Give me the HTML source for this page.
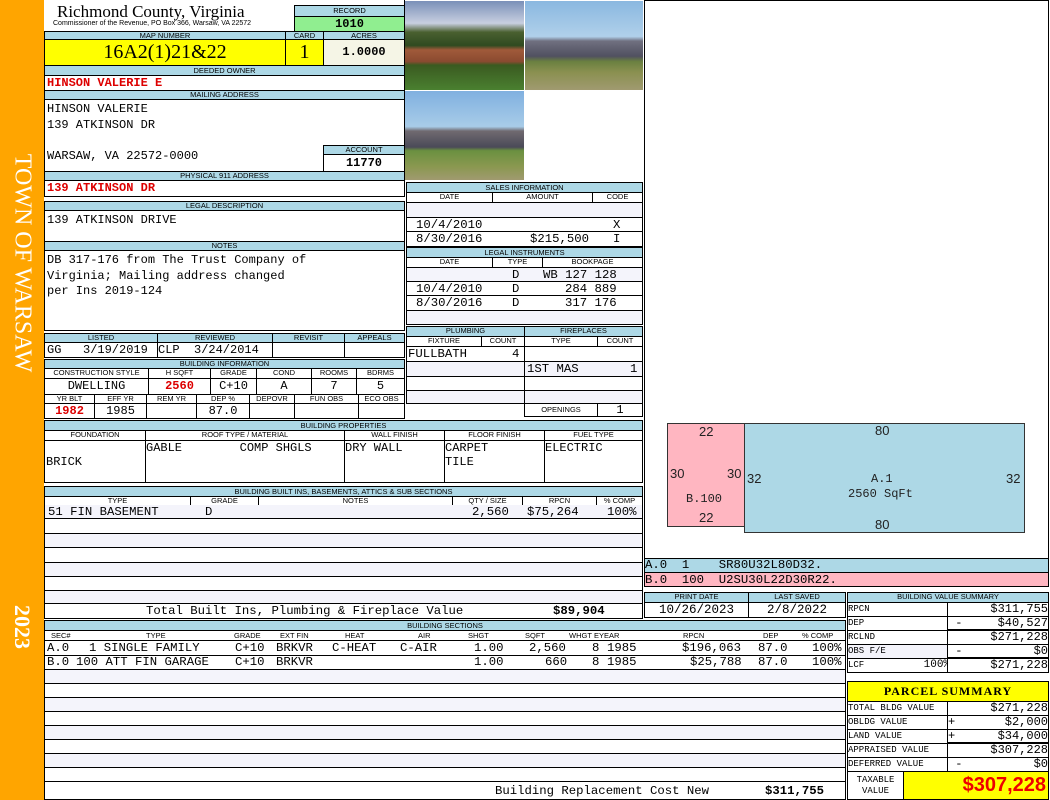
<!DOCTYPE html>
<html><head><meta charset="utf-8"><style>
*{margin:0;padding:0}
body{width:1050px;height:800px;position:relative;background:#fff;overflow:hidden;font-family:"Liberation Sans",sans-serif}
.c{position:absolute;box-sizing:border-box;border:1px solid #000;overflow:hidden;white-space:pre}
.h{background:#add8e6;font-size:7.5px;text-align:center;line-height:8px;color:#000}
.m{font-family:"Liberation Mono",monospace;font-size:12px;line-height:14px}
.r{color:#d00;font-weight:bold}
.lt{background:#f4f4fb}
.rt{text-align:right}
.ct{text-align:center}
.s{position:absolute;font-family:"Liberation Mono",monospace;font-size:12.3px;white-space:pre;line-height:14px}
.hl{position:absolute;font-size:7.5px;line-height:9px;white-space:nowrap}
</style></head><body>
<div style="position:absolute;left:0;top:0;width:44px;height:800px;background:#ffa500"></div>
<div style="position:absolute;left:22px;top:263px;transform:translate(-50%,-50%) rotate(90deg);white-space:nowrap;color:#fff;font:24px 'Liberation Serif',serif">TOWN OF WARSAW</div>
<div style="position:absolute;left:22px;top:627px;transform:translate(-50%,-50%) rotate(90deg);white-space:nowrap;color:#fff;font:bold 22px 'Liberation Serif',serif">2023</div>

<div style="position:absolute;left:57px;top:2px;font:17px 'Liberation Serif',serif;white-space:nowrap">Richmond County, Virginia</div>
<div style="position:absolute;left:53px;top:20px;font:7px 'Liberation Sans',sans-serif;white-space:nowrap">Commissioner of the Revenue, PO Box 366, Warsaw, VA 22572</div>
<div class="c h" style="left:294px;top:5px;width:111px;height:12px;line-height:10px">RECORD</div>
<div class="c" style="left:294px;top:16px;width:111px;height:16px;background:#90ee90;font:bold 12px 'Liberation Mono',monospace;text-align:center;line-height:14px">1010</div>

<div class="c h" style="left:44px;top:31px;width:242px;height:9px">MAP NUMBER</div>
<div class="c h" style="left:285px;top:31px;width:39px;height:9px">CARD</div>
<div class="c h" style="left:323px;top:31px;width:82px;height:9px">ACRES</div>
<div class="c" style="left:44px;top:39px;width:242px;height:27px;background:#ffff00;font:20px 'Liberation Serif',serif;text-align:center;line-height:25px">16A2(1)21&amp;22</div>
<div class="c" style="left:285px;top:39px;width:39px;height:27px;background:#ffff00;font:20px 'Liberation Serif',serif;text-align:center;line-height:25px">1</div>
<div class="c" style="left:323px;top:39px;width:82px;height:27px;background:#f5f5e6;font:bold 12px 'Liberation Mono',monospace;text-align:center;line-height:25px">1.0000</div>

<div class="c h" style="left:44px;top:65px;width:361px;height:11px;line-height:9px">DEEDED OWNER</div>
<div class="c m r" style="left:44px;top:75px;width:361px;height:16px;padding-left:2px">HINSON VALERIE E</div>
<div class="c h" style="left:44px;top:90px;width:361px;height:10px">MAILING ADDRESS</div>
<div class="c m" style="left:44px;top:99px;width:361px;height:73px;padding:2px 0 0 2px;line-height:15.5px">HINSON VALERIE
139 ATKINSON DR

WARSAW, VA 22572-0000</div>
<div class="c h" style="left:323px;top:145px;width:82px;height:10px">ACCOUNT</div>
<div class="c" style="left:323px;top:154px;width:82px;height:18px;font:bold 12px 'Liberation Mono',monospace;text-align:center;line-height:16px">11770</div>
<div class="c h" style="left:44px;top:171px;width:361px;height:10px">PHYSICAL 911 ADDRESS</div>
<div class="c m r" style="left:44px;top:180px;width:361px;height:17px;padding-left:2px">139 ATKINSON DR</div>

<div class="c h" style="left:44px;top:201px;width:361px;height:10px">LEGAL DESCRIPTION</div>
<div class="c m" style="left:44px;top:210px;width:361px;height:32px;padding:2px 0 0 2px">139 ATKINSON DRIVE</div>
<div class="c h" style="left:44px;top:241px;width:361px;height:10px">NOTES</div>
<div class="c m" style="left:44px;top:250px;width:361px;height:81px;padding:2px 0 0 2px;line-height:15.5px">DB 317-176 from The Trust Company of
Virginia; Mailing address changed
per Ins 2019-124</div>

<div class="c h" style="left:44px;top:333px;width:114px;height:10px">LISTED</div>
<div class="c h" style="left:157px;top:333px;width:116px;height:10px">REVIEWED</div>
<div class="c h" style="left:272px;top:333px;width:73px;height:10px">REVISIT</div>
<div class="c h" style="left:344px;top:333px;width:61px;height:10px">APPEALS</div>
<div class="c m" style="left:44px;top:342px;width:114px;height:16px;padding-left:2px">GG   3/19/2019</div>
<div class="c m" style="left:157px;top:342px;width:116px;height:16px">CLP  3/24/2014</div>
<div class="c" style="left:272px;top:342px;width:73px;height:16px"></div>
<div class="c" style="left:344px;top:342px;width:61px;height:16px"></div>

<div class="c h" style="left:44px;top:359px;width:361px;height:10px">BUILDING INFORMATION</div>
<div class="c h" style="left:44px;top:368px;width:105px;height:11px;background:#fff">CONSTRUCTION STYLE</div>
<div class="c h" style="left:148px;top:368px;width:63px;height:11px;background:#fff">H SQFT</div>
<div class="c h" style="left:210px;top:368px;width:47px;height:11px;background:#fff">GRADE</div>
<div class="c h" style="left:256px;top:368px;width:56px;height:11px;background:#fff">COND</div>
<div class="c h" style="left:311px;top:368px;width:46px;height:11px;background:#fff">ROOMS</div>
<div class="c h" style="left:356px;top:368px;width:49px;height:11px;background:#fff">BDRMS</div>
<div class="c m ct" style="left:44px;top:378px;width:105px;height:17px">DWELLING</div>
<div class="c m ct r" style="left:148px;top:378px;width:63px;height:17px">2560</div>
<div class="c m ct" style="left:210px;top:378px;width:47px;height:17px">C+10</div>
<div class="c m ct" style="left:256px;top:378px;width:56px;height:17px">A</div>
<div class="c m ct" style="left:311px;top:378px;width:46px;height:17px">7</div>
<div class="c m ct" style="left:356px;top:378px;width:49px;height:17px">5</div>
<div class="c h" style="left:44px;top:394px;width:51px;height:10px;background:#fff">YR BLT</div>
<div class="c h" style="left:94px;top:394px;width:53px;height:10px;background:#fff">EFF YR</div>
<div class="c h" style="left:146px;top:394px;width:51px;height:10px;background:#fff">REM YR</div>
<div class="c h" style="left:196px;top:394px;width:54px;height:10px;background:#fff">DEP %</div>
<div class="c h" style="left:249px;top:394px;width:46px;height:10px;background:#fff">DEPOVR</div>
<div class="c h" style="left:294px;top:394px;width:65px;height:10px;background:#fff">FUN OBS</div>
<div class="c h" style="left:358px;top:394px;width:47px;height:10px;background:#fff">ECO OBS</div>
<div class="c m ct r" style="left:44px;top:403px;width:51px;height:16px">1982</div>
<div class="c m ct" style="left:94px;top:403px;width:53px;height:16px">1985</div>
<div class="c m" style="left:146px;top:403px;width:51px;height:16px"></div>
<div class="c m ct" style="left:196px;top:403px;width:54px;height:16px">87.0</div>
<div class="c" style="left:249px;top:403px;width:46px;height:16px"></div>
<div class="c" style="left:294px;top:403px;width:65px;height:16px"></div>
<div class="c" style="left:358px;top:403px;width:47px;height:16px"></div>

<div class="c h" style="left:44px;top:420px;width:599px;height:11px;line-height:9px">BUILDING PROPERTIES</div>
<div class="c h" style="left:44px;top:430px;width:102px;height:11px;background:#fff">FOUNDATION</div>
<div class="c h" style="left:145px;top:430px;width:200px;height:11px;background:#fff">ROOF TYPE / MATERIAL</div>
<div class="c h" style="left:344px;top:430px;width:101px;height:11px;background:#fff">WALL FINISH</div>
<div class="c h" style="left:444px;top:430px;width:101px;height:11px;background:#fff">FLOOR FINISH</div>
<div class="c h" style="left:544px;top:430px;width:99px;height:11px;background:#fff">FUEL TYPE</div>
<div class="c m" style="left:44px;top:440px;width:102px;height:43px;padding:14px 0 0 1px">BRICK</div>
<div class="c m" style="left:145px;top:440px;width:200px;height:43px">GABLE        COMP SHGLS</div>
<div class="c m" style="left:344px;top:440px;width:101px;height:43px">DRY WALL</div>
<div class="c m" style="left:444px;top:440px;width:101px;height:43px">CARPET
TILE</div>
<div class="c m" style="left:544px;top:440px;width:99px;height:43px">ELECTRIC</div>

<div class="c h" style="left:44px;top:486px;width:599px;height:11px;line-height:9px">BUILDING BUILT INS, BASEMENTS, ATTICS &amp; SUB SECTIONS</div>
<div class="c h" style="left:44px;top:496px;width:147px;height:10px;background:#fff">TYPE</div>
<div class="c h" style="left:190px;top:496px;width:69px;height:10px;background:#fff">GRADE</div>
<div class="c h" style="left:258px;top:496px;width:195px;height:10px;background:#fff">NOTES</div>
<div class="c h" style="left:452px;top:496px;width:71px;height:10px;background:#fff">QTY / SIZE</div>
<div class="c h" style="left:522px;top:496px;width:75px;height:10px;background:#fff">RPCN</div>
<div class="c h" style="left:596px;top:496px;width:47px;height:10px;background:#fff">% COMP</div>
<div class="c lt" style="left:44px;top:505px;width:599px;height:14px;border-top:none"></div>
<span class="s" style="left:48px;top:505px">51 FIN BASEMENT</span>
<span class="s" style="left:205px;top:505px">D</span>
<span class="s" style="left:472px;top:505px">2,560</span>
<span class="s" style="left:527px;top:505px">$75,264</span>
<span class="s" style="left:607px;top:505px">100%</span>
<div class="c" style="left:44px;top:518px;width:599px;height:16px"></div>
<div class="c lt" style="left:44px;top:533px;width:599px;height:15px"></div>
<div class="c" style="left:44px;top:547px;width:599px;height:16px"></div>
<div class="c lt" style="left:44px;top:562px;width:599px;height:15px"></div>
<div class="c" style="left:44px;top:576px;width:599px;height:15px"></div>
<div class="c lt" style="left:44px;top:590px;width:599px;height:14px"></div>
<div class="c" style="left:44px;top:603px;width:599px;height:16px"></div>
<span class="s" style="left:146px;top:604px">Total Built Ins, Plumbing &amp; Fireplace Value</span>
<span class="s" style="left:553px;top:604px;font-weight:bold">$89,904</span>

<div class="c h" style="left:44px;top:620px;width:802px;height:11px;line-height:9px">BUILDING SECTIONS</div>
<div class="c" style="left:44px;top:630px;width:802px;height:11px"></div>
<span class="hl" style="left:51px;top:631px">SEC#</span>
<span class="hl" style="left:146px;top:631px">TYPE</span>
<span class="hl" style="left:234px;top:631px">GRADE</span>
<span class="hl" style="left:280px;top:631px">EXT FIN</span>
<span class="hl" style="left:345px;top:631px">HEAT</span>
<span class="hl" style="left:418px;top:631px">AIR</span>
<span class="hl" style="left:468px;top:631px">SHGT</span>
<span class="hl" style="left:525px;top:631px">SQFT</span>
<span class="hl" style="left:569px;top:631px">WHGT</span>
<span class="hl" style="left:594px;top:631px">EYEAR</span>
<span class="hl" style="left:683px;top:631px">RPCN</span>
<span class="hl" style="left:763px;top:631px">DEP</span>
<span class="hl" style="left:802px;top:631px">% COMP</span>
<div class="c" style="left:44px;top:640px;width:802px;height:16px"></div>
<div class="c" style="left:44px;top:655px;width:802px;height:15px"></div>
<span class="s" style="left:47px;top:641px">A.0</span>
<span class="s" style="left:89px;top:641px">1 SINGLE FAMILY</span>
<span class="s" style="left:235px;top:641px">C+10</span>
<span class="s" style="left:276px;top:641px">BRKVR</span>
<span class="s" style="left:332px;top:641px">C-HEAT</span>
<span class="s" style="left:400px;top:641px">C-AIR</span>
<span class="s" style="left:474px;top:641px">1.00</span>
<span class="s" style="left:529px;top:641px">2,560</span>
<span class="s" style="left:592px;top:641px">8</span>
<span class="s" style="left:607px;top:641px">1985</span>
<span class="s" style="left:682px;top:641px">$196,063</span>
<span class="s" style="left:758px;top:641px">87.0</span>
<span class="s" style="left:812px;top:641px">100%</span>
<span class="s" style="left:47px;top:655px">B.0</span>
<span class="s" style="left:76px;top:655px">100 ATT FIN GARAGE</span>
<span class="s" style="left:235px;top:655px">C+10</span>
<span class="s" style="left:276px;top:655px">BRKVR</span>
<span class="s" style="left:474px;top:655px">1.00</span>
<span class="s" style="left:545px;top:655px">660</span>
<span class="s" style="left:592px;top:655px">8</span>
<span class="s" style="left:607px;top:655px">1985</span>
<span class="s" style="left:690px;top:655px">$25,788</span>
<span class="s" style="left:758px;top:655px">87.0</span>
<span class="s" style="left:812px;top:655px">100%</span>
<div class="c lt" style="left:44px;top:669px;width:802px;height:15px"></div>
<div class="c" style="left:44px;top:683px;width:802px;height:15px"></div>
<div class="c lt" style="left:44px;top:697px;width:802px;height:15px"></div>
<div class="c" style="left:44px;top:711px;width:802px;height:15px"></div>
<div class="c lt" style="left:44px;top:725px;width:802px;height:15px"></div>
<div class="c" style="left:44px;top:739px;width:802px;height:15px"></div>
<div class="c lt" style="left:44px;top:753px;width:802px;height:15px"></div>
<div class="c" style="left:44px;top:767px;width:802px;height:15px"></div>
<div class="c" style="left:44px;top:781px;width:802px;height:19px"></div>
<span class="s" style="left:495px;top:784px">Building Replacement Cost New</span>
<span class="s" style="left:765px;top:784px;font-weight:bold">$311,755</span>

<div style="position:absolute;left:405px;top:1px;width:119px;height:89px;background:linear-gradient(#7a90b8 0%,#c8cfe0 25%,#4a6030 35%,#2f4a20 50%,#a05a3a 55%,#8a4a30 68%,#3a5a20 72%,#4a8030 100%)"></div>
<div style="position:absolute;left:525px;top:1px;width:118px;height:89px;background:linear-gradient(#8ab8e0 0%,#b0d0ea 40%,#707080 45%,#505060 62%,#6a8040 68%,#8a9050 80%,#a09a70 100%)"></div>
<div style="position:absolute;left:405px;top:91px;width:119px;height:89px;background:linear-gradient(#80b0e0 0%,#a8cce8 40%,#706a70 45%,#4a4a58 63%,#6a9040 67%,#8a9850 85%,#a09a70 100%)"></div>
<div style="position:absolute;left:404px;top:0;width:1px;height:181px;background:#000"></div>

<div class="c h" style="left:406px;top:182px;width:237px;height:11px;line-height:9px">SALES INFORMATION</div>
<div class="c h" style="left:406px;top:192px;width:87px;height:11px;background:#fff">DATE</div>
<div class="c h" style="left:492px;top:192px;width:101px;height:11px;background:#fff">AMOUNT</div>
<div class="c h" style="left:592px;top:192px;width:51px;height:11px;background:#fff">CODE</div>
<div class="c lt" style="left:406px;top:202px;width:237px;height:16px"></div>
<div class="c" style="left:406px;top:217px;width:237px;height:15px"></div>
<div class="c" style="left:406px;top:231px;width:237px;height:16px"></div>
<span class="s" style="left:416px;top:218px">10/4/2010</span>
<span class="s" style="left:613px;top:218px">X</span>
<span class="s" style="left:416px;top:232px">8/30/2016</span>
<span class="s" style="left:530px;top:232px">$215,500</span>
<span class="s" style="left:613px;top:232px">I</span>
<div class="c h" style="left:406px;top:247px;width:237px;height:11px;line-height:9px">LEGAL INSTRUMENTS</div>
<div class="c h" style="left:406px;top:257px;width:87px;height:11px;background:#fff">DATE</div>
<div class="c h" style="left:492px;top:257px;width:51px;height:11px;background:#fff">TYPE</div>
<div class="c h" style="left:542px;top:257px;width:101px;height:11px;background:#fff">BOOKPAGE</div>
<div class="c lt" style="left:406px;top:267px;width:237px;height:15px"></div>
<div class="c" style="left:406px;top:281px;width:237px;height:15px"></div>
<div class="c" style="left:406px;top:295px;width:237px;height:16px"></div>
<div class="c lt" style="left:406px;top:310px;width:237px;height:15px"></div>
<span class="s" style="left:512px;top:268px">D</span>
<span class="s" style="left:543px;top:268px">WB 127 128</span>
<span class="s" style="left:416px;top:282px">10/4/2010</span>
<span class="s" style="left:512px;top:282px">D</span>
<span class="s" style="left:565px;top:282px">284 889</span>
<span class="s" style="left:416px;top:296px">8/30/2016</span>
<span class="s" style="left:512px;top:296px">D</span>
<span class="s" style="left:565px;top:296px">317 176</span>

<div class="c h" style="left:406px;top:326px;width:119px;height:11px">PLUMBING</div>
<div class="c h" style="left:524px;top:326px;width:119px;height:11px">FIREPLACES</div>
<div class="c h" style="left:406px;top:336px;width:76px;height:11px;background:#fff">FIXTURE</div>
<div class="c h" style="left:481px;top:336px;width:44px;height:11px;background:#fff">COUNT</div>
<div class="c h" style="left:524px;top:336px;width:74px;height:11px;background:#fff">TYPE</div>
<div class="c h" style="left:597px;top:336px;width:46px;height:11px;background:#fff">COUNT</div>
<div class="c" style="left:406px;top:346px;width:119px;height:16px"></div>
<div class="c lt" style="left:406px;top:361px;width:119px;height:16px"></div>
<div class="c" style="left:406px;top:376px;width:119px;height:15px"></div>
<div class="c lt" style="left:406px;top:390px;width:119px;height:14px"></div>
<div class="c" style="left:524px;top:346px;width:119px;height:16px"></div>
<div class="c lt" style="left:524px;top:361px;width:119px;height:16px"></div>
<div class="c" style="left:524px;top:376px;width:119px;height:15px"></div>
<div class="c lt" style="left:524px;top:390px;width:119px;height:14px"></div>
<span class="s" style="left:408px;top:347px">FULLBATH</span>
<span class="s" style="left:512px;top:347px">4</span>
<span class="s" style="left:527px;top:362px">1ST MAS</span>
<span class="s" style="left:630px;top:362px">1</span>
<div class="c h" style="left:524px;top:403px;width:74px;height:14px;background:#fff;line-height:12px">OPENINGS</div>
<div class="c m ct" style="left:597px;top:403px;width:46px;height:14px;line-height:12px">1</div>

<div class="c" style="left:644px;top:0;width:405px;height:559px;background:#fff"></div>
<div style="position:absolute;left:667px;top:423px;width:78px;height:104px;background:#ffb6c1;border:1px solid #333;box-sizing:border-box"></div>
<div style="position:absolute;left:744px;top:423px;width:281px;height:110px;background:#add8e6;border:1px solid #333;box-sizing:border-box"></div>
<div style="position:absolute;font:13px 'Liberation Sans',sans-serif;color:#222;white-space:nowrap">
<span style="position:absolute;left:699px;top:424px">22</span>
<span style="position:absolute;left:699px;top:510px">22</span>
<span style="position:absolute;left:670px;top:466px">30</span>
<span style="position:absolute;left:727px;top:466px">30</span>
<span style="position:absolute;left:747px;top:471px">32</span>
<span style="position:absolute;left:1006px;top:471px">32</span>
<span style="position:absolute;left:875px;top:423px">80</span>
<span style="position:absolute;left:875px;top:517px">80</span>
</div>
<div style="position:absolute;left:686px;top:492px;font:12px 'Liberation Mono',monospace;color:#222">B.100</div>
<div style="position:absolute;left:871px;top:472px;font:12px 'Liberation Mono',monospace;color:#222">A.1</div>
<div style="position:absolute;left:848px;top:487px;font:12px 'Liberation Mono',monospace;color:#222">2560 SqFt</div>

<div class="c m" style="left:644px;top:558px;width:405px;height:15px;background:#add8e6;line-height:13px;border-bottom:none;font-size:12.3px">A.0  1    SR80U32L80D32.</div>
<div class="c m" style="left:644px;top:572px;width:405px;height:15px;background:#ffb6c1;line-height:14px;font-size:12.3px">B.0  100  U2SU30L22D30R22.</div>

<div class="c h" style="left:644px;top:592px;width:105px;height:11px">PRINT DATE</div>
<div class="c h" style="left:748px;top:592px;width:98px;height:11px">LAST SAVED</div>
<div class="c m ct" style="left:644px;top:602px;width:105px;height:16px;font-size:12.5px">10/26/2023</div>
<div class="c m ct" style="left:748px;top:602px;width:98px;height:16px;font-size:12.5px">2/8/2022</div>

<div class="c h" style="left:847px;top:592px;width:202px;height:11px">BUILDING VALUE SUMMARY</div>
<div class="c m" style="left:847px;top:602px;width:101px;height:15px;font-size:9px;line-height:13px">RPCN</div>
<div class="c m rt" style="left:947px;top:602px;width:102px;height:15px;line-height:13px">$311,755</div>
<div class="c m" style="left:847px;top:616px;width:101px;height:15px;font-size:9px;line-height:13px">DEP</div>
<div class="c m rt" style="left:947px;top:616px;width:102px;height:15px;line-height:13px;border-bottom:2px solid #000"><span style="float:left">&nbsp;-</span>$40,527</div>
<div class="c m" style="left:847px;top:630px;width:101px;height:15px;font-size:9px;line-height:13px">RCLND</div>
<div class="c m rt" style="left:947px;top:630px;width:102px;height:15px;line-height:13px">$271,228</div>
<div class="c m lt" style="left:847px;top:644px;width:101px;height:15px;font-size:9px;line-height:13px">OBS F/E</div>
<div class="c m rt" style="left:947px;top:644px;width:102px;height:15px;line-height:13px;border-bottom:2px solid #000"><span style="float:left">&nbsp;-</span>$0</div>
<div class="c m" style="left:847px;top:658px;width:101px;height:15px;font-size:9px;line-height:13px">LCF           <span style="font-size:11px">100%</span></div>
<div class="c m rt" style="left:947px;top:658px;width:102px;height:15px;line-height:13px">$271,228</div>

<div class="c" style="left:847px;top:681px;width:202px;height:21px;background:#ffff00;font:bold 12px 'Liberation Serif',serif;text-align:center;line-height:19px;letter-spacing:1px">PARCEL SUMMARY</div>
<div class="c m" style="left:847px;top:701px;width:101px;height:15px;font-size:9px;line-height:13px">TOTAL BLDG VALUE</div>
<div class="c m rt" style="left:947px;top:701px;width:102px;height:15px;line-height:13px">$271,228</div>
<div class="c m" style="left:847px;top:715px;width:101px;height:15px;font-size:9px;line-height:13px">OBLDG VALUE</div>
<div class="c m rt" style="left:947px;top:715px;width:102px;height:15px;line-height:13px"><span style="float:left">+</span>$2,000</div>
<div class="c m" style="left:847px;top:729px;width:101px;height:15px;font-size:9px;line-height:13px">LAND VALUE</div>
<div class="c m rt" style="left:947px;top:729px;width:102px;height:15px;line-height:13px;border-bottom:2px solid #000"><span style="float:left">+</span>$34,000</div>
<div class="c m" style="left:847px;top:743px;width:101px;height:15px;font-size:9px;line-height:13px">APPRAISED VALUE</div>
<div class="c m rt" style="left:947px;top:743px;width:102px;height:15px;line-height:13px">$307,228</div>
<div class="c m" style="left:847px;top:757px;width:101px;height:15px;font-size:9px;line-height:13px">DEFERRED VALUE</div>
<div class="c m rt" style="left:947px;top:757px;width:102px;height:15px;line-height:13px"><span style="float:left">&nbsp;-</span>$0</div>
<div class="c m ct" style="left:847px;top:771px;width:57px;height:29px;font-size:9px;line-height:11px;padding-top:3px">TAXABLE
VALUE</div>
<div class="c" style="left:903px;top:771px;width:146px;height:29px;background:#ffff00;color:#e00;font:bold 20px 'Liberation Sans',sans-serif;text-align:right;line-height:27px;padding-right:2px">$307,228</div>
</body></html>
